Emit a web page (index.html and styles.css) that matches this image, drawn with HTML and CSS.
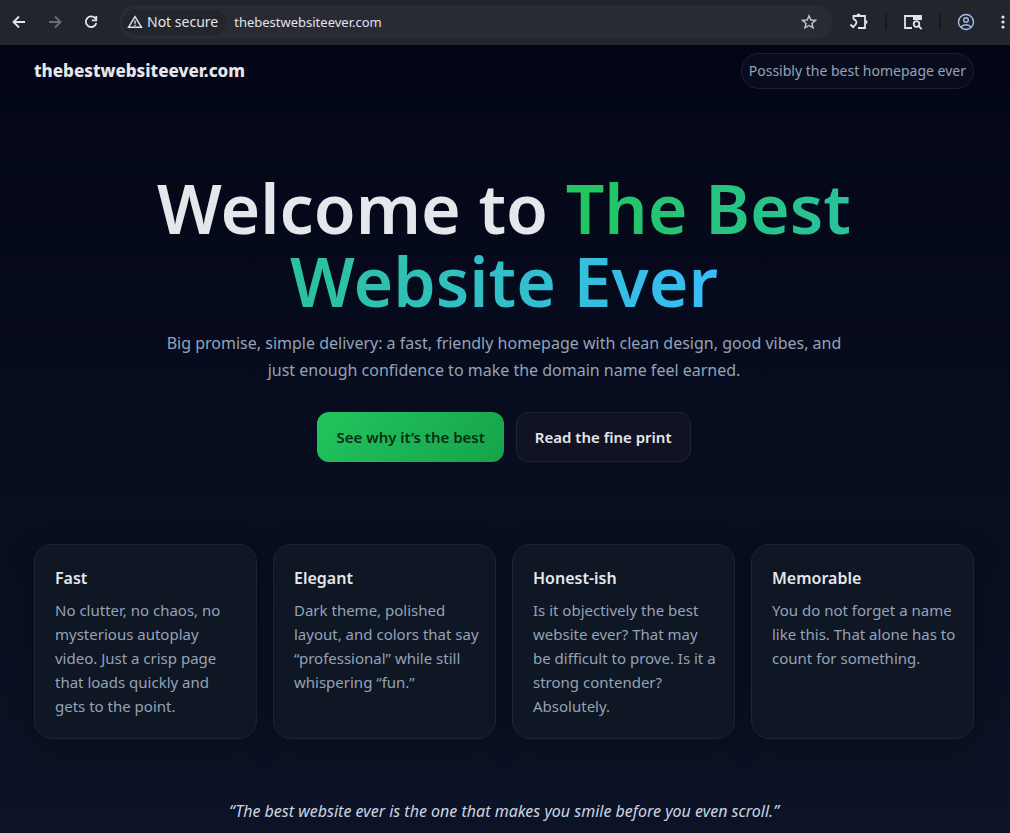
FILE: index.html
```html
<!DOCTYPE html>
<html lang="en">
<head>
<meta charset="utf-8">
<meta name="viewport" content="width=device-width, initial-scale=1">
<title>The Best Website Ever</title>
<link rel="stylesheet" href="styles.css">
</head>
<body>
<div class="toolbar">
  <button class="tool" type="button" aria-label="Back"><svg viewBox="0 0 16 16" width="16" height="16"><path d="M14 8H3M8 2.500 2.500 8 8 13.500"/></svg></button>
  <button class="tool tool-off" type="button" aria-label="Forward"><svg viewBox="0 0 16 16" width="16" height="16"><path d="M2 8h11M8 2.500 13.500 8 8 13.500"/></svg></button>
  <button class="tool" type="button" aria-label="Reload"><svg viewBox="0 0 16 16" width="16" height="16"><path d="M12.600 4.800A5.300 5.300 0 1 0 13.300 9M13.300 2v4.400H8.800"/></svg></button>
  <div class="address">
    <button class="security" type="button"><svg viewBox="0 0 16 16" width="16" height="16"><path class="thin" d="M8 2.600 14.500 13.300H1.500zM8 6.500v3.300M8 10.700v1.300"/></svg>Not secure</button>
    <input class="url" type="text" aria-label="Address" value="thebestwebsiteever.com">
    <button class="star" type="button" aria-label="Bookmark"><svg viewBox="0 0 16 16" width="16" height="16"><path class="thin" d="m8 1.800 1.800 4.200 4.600.4-3.500 3 1.100 4.500L8 11.500l-4 2.400 1.100-4.500-3.500-3 4.600-.4z"/></svg></button>
  </div>
  <div class="actions">
    <button class="tool" type="button" aria-label="Extensions"><svg viewBox="0 0 20 20" width="20" height="20"><path d="M4.500 7.500V4H16v12H9"/><path class="solid" d="M7.500 3.500a2 2 0 0 1 4 0zM16.500 8a2 2 0 0 1 0 4z"/><path d="M4.500 7.500c2.600 0 4 3 2 5l-2.300 2.700L1.500 12.500"/></svg></button>
    <span class="divider"></span>
    <button class="tool" type="button" aria-label="Search tabs"><svg viewBox="0 0 20 20" width="20" height="20"><path d="M9 16H2V4h16v4"/><path class="solid" d="M10 3h8v5h-8z"/><circle cx="13.500" cy="12" r="2.800"/><path d="m15.500 14 3.200 3.200"/></svg></button>
    <span class="divider"></span>
    <button class="tool profile" type="button" aria-label="Profile"><svg viewBox="0 0 18 18" width="18" height="18"><circle class="thin" cx="9" cy="9" r="7.500"/><circle class="thin" cx="9" cy="7" r="2.300"/><path class="thin" d="M4 14c2.500-3 7.500-3 10 0"/></svg></button>
    <button class="tool more" type="button" aria-label="Menu"><svg viewBox="0 0 16 16" width="16" height="16"><circle class="solid" cx="8" cy="3" r="1.600"/><circle class="solid" cx="8" cy="8" r="1.600"/><circle class="solid" cx="8" cy="13" r="1.600"/></svg></button>
  </div>
</div>
<div class="page">
  <header class="header">
    <a class="brand" href="#">thebestwebsiteever.com</a>
    <span class="pill">Possibly the best homepage ever</span>
  </header>
  <main>
    <section class="hero">
      <h1>Welcome to <span class="accent">The Best<br>Website Ever</span></h1>
      <p class="lead">Big promise, simple delivery: a fast, friendly homepage with clean design, good vibes, and<br>just enough confidence to make the domain name feel earned.</p>
      <div class="buttons">
        <a class="button primary" href="#best">See why it’s the best</a>
        <a class="button" href="#quote">Read the fine print</a>
      </div>
    </section>
    <section class="cards" id="best">
      <article class="card"><h2>Fast</h2><p>No clutter, no chaos, no<br>mysterious autoplay<br>video. Just a crisp page<br>that loads quickly and<br>gets to the point.</p></article>
      <article class="card"><h2>Elegant</h2><p>Dark theme, polished<br>layout, and colors that say<br>“professional” while still<br>whispering “fun.”</p></article>
      <article class="card"><h2>Honest-ish</h2><p>Is it objectively the best<br>website ever? That may<br>be difficult to prove. Is it a<br>strong contender?<br>Absolutely.</p></article>
      <article class="card"><h2>Memorable</h2><p>You do not forget a name<br>like this. That alone has to<br>count for something.</p></article>
    </section>
    <p class="quote" id="quote">“The best website ever is the one that makes you smile before you even scroll.”</p>
  </main>
</div>
</body>
</html>
```
FILE: styles.css
```css
* { box-sizing: border-box; }
body {
  margin: 0;
  min-height: 100vh;
  display: flex;
  flex-direction: column;
  background: #0d1326;
  color: #e5e7eb;
  font-family: "Noto Sans", sans-serif;
  overflow-x: hidden;
}
button, input { font: inherit; color: inherit; background: none; border: 0; padding: 0; }
svg { display: block; fill: none; stroke: currentColor; stroke-width: 1.8; }
.thin { stroke-width: 1.4; }
.solid { fill: currentColor; stroke: none; }

.toolbar {
  display: flex;
  align-items: center;
  height: 45px;
  padding: 0 0 2px 11px;
  background: #22252c;
  color: #e3e4e8;
  font-size: 14px;
}
.tool { flex: none; margin-right: 20px; }
.tool-off { color: #6b6e75; }
.address {
  flex: 1;
  min-width: 0;
  display: flex;
  align-items: center;
  height: 34px;
  padding: 0 16px 0 4px;
  border-radius: 17px;
  background: #282a34;
}
.security {
  display: flex;
  align-items: center;
  gap: 4px;
  height: 26px;
  padding: 0 8px 0 4px;
  border-radius: 13px;
  background: #22252c;
  white-space: nowrap;
}
.url { flex: 1; min-width: 0; padding-left: 8px; font-size: 13px; outline: 0; }
.star { color: #c6c7cc; }
.actions { display: flex; align-items: center; gap: 16px; padding-left: 16px; margin-right: -1px; }
.actions .tool { margin-right: 0; }
.divider { width: 2px; height: 16px; background: #15171d; }
.profile { color: #a8bdf0; }
.more { margin-left: 4px; }

.page {
  flex: 1;
  padding: 8px 36px 0 34px;
  background: linear-gradient(#020617, #0d1326);
}
.header { display: flex; justify-content: space-between; align-items: center; }
.brand { color: inherit; font-size: 17px; line-height: 24px; font-weight: 800; text-decoration: none; }
.pill {
  padding: 6px 7px;
  border: 1px solid #1c2230;
  border-radius: 18px;
  background: #080c1d;
  color: #94a3b8;
  font-size: 14px;
  line-height: 22px;
}
.hero { padding: 82px 0; text-align: center; }
h1 { margin: 0; font-size: 68px; line-height: 73px; font-weight: 600; }
.accent {
  background: linear-gradient(90deg, #22c55e, #38bdf8);
  background-clip: text;
  -webkit-background-clip: text;
  color: transparent;
}
.lead { margin: 13px 0 28px; color: #94a3b8; font-size: 16px; line-height: 27px; }
.buttons { display: flex; justify-content: center; gap: 12px; }
.button {
  padding: 12px 18px;
  border: 1px solid #1f2432;
  border-radius: 12px;
  background: #0f1324;
  color: #e5e7eb;
  font-size: 15px;
  font-weight: 600;
  line-height: 24px;
  text-decoration: none;
}
.primary { border-color: transparent; background: linear-gradient(135deg, #22c55e, #16a34a) border-box; color: #052e16; }
.cards { display: grid; grid-template-columns: repeat(4, minmax(0, 1fr)); gap: 16px; }
.card {
  padding: 20px;
  border: 1px solid #1d2433;
  border-radius: 18px;
  background: #0f1624;
  box-shadow: 0 10px 30px rgba(0, 0, 0, .25);
}
h2 { margin: 0 0 7px; font-size: 16px; line-height: 26px; font-weight: 600; }
.card p { margin: 0; color: #94a3b8; font-size: 15px; line-height: 24px; white-space: nowrap; }
.quote { margin: 0; padding: 59px 0 8px; text-align: center; color: #cbd5e1; font-size: 16px; line-height: 27px; font-style: italic; }

@media (max-width: 900px) {
  h1 { font-size: 48px; line-height: 52px; }
  .cards { grid-template-columns: repeat(2, minmax(0, 1fr)); }
  .card p { white-space: normal; }
  .lead br, .card br { display: none; }
}
```
